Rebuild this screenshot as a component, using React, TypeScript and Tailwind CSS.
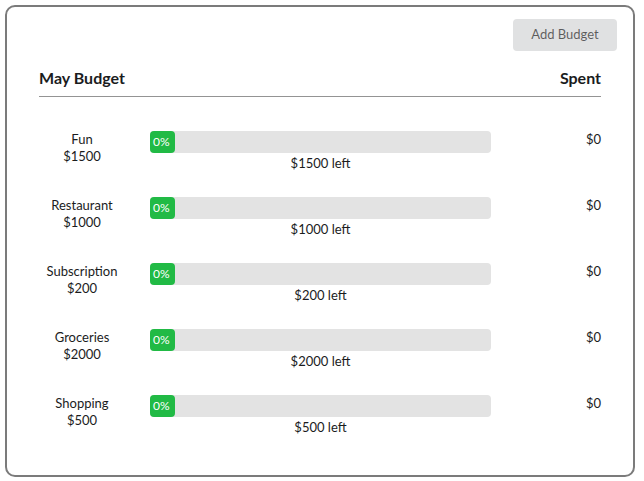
import React from "react";

const rows = [
  { name: "Fun", amount: 1500 },
  { name: "Restaurant", amount: 1000 },
  { name: "Subscription", amount: 200 },
  { name: "Groceries", amount: 2000 },
  { name: "Shopping", amount: 500 },
];

export default function App() {
  return (
    <div className="w-[644px] h-[481px] bg-white pt-[5px] pl-[5px]" style={{ fontFamily: "Lato, 'Open Sans', sans-serif" }}>
      <div className="w-[630px] h-[472px] border-2 border-[#7b7b7b] rounded-[10px] flex flex-col">
        <div className="flex justify-end pt-[12px] pr-[16px]">
          <button className="w-[104px] h-[32px] rounded-[4px] bg-[#e0e1e2] text-[13px] text-[rgba(0,0,0,0.6)]">
            Add Budget
          </button>
        </div>
        <div className="px-[32px] text-[#1b1c1d]">
          <div className="flex justify-between items-end mt-[17px] pb-[8px] border-b border-[#949494] text-[16px] leading-[20px] font-bold">
            <span>May Budget</span>
            <span>Spent</span>
          </div>
          <div className="flex flex-col gap-[25px] pt-[34px]">
            {rows.map((r) => (
              <div key={r.name} className="flex items-start text-[13px] leading-[17px]">
                <div className="w-[86px] text-center">
                  <div>{r.name}</div>
                  <div>${r.amount}</div>
                </div>
                <div className="ml-[25px] w-[341px] flex flex-col">
                  <div className="h-[22px] w-full rounded-[4px] bg-[#e3e3e3] flex">
                    <div className="h-[22px] w-[25px] rounded-[4px] bg-[#21ba45] text-white text-[12px] leading-[22px] pl-[3px]">
                      0%
                    </div>
                  </div>
                  <div className="text-center mt-[2px]">${r.amount} left</div>
                </div>
                <div className="flex-1 text-right">$0</div>
              </div>
            ))}
          </div>
        </div>
      </div>
    </div>
  );
}
